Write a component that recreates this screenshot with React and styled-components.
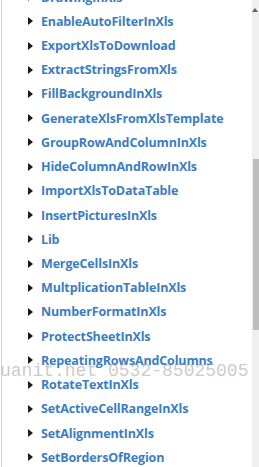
import React from "react";
import styled, { createGlobalStyle } from "styled-components";

const Global = createGlobalStyle`
  html, body { margin: 0; padding: 0; background: #ffffff; }
  body { width: 259px; height: 467px; overflow: hidden; }
`;

const Frame = styled.div`
  position: relative;
  display: flex;
  width: 259px;
  height: 467px;
  overflow: hidden;
  background: #ffffff;
`;

const Panel = styled.div`
  flex: 1;
  margin-left: 1px;
  border-left: 1px solid #d4d4d4;
  overflow: hidden;
`;

const List = styled.ul`
  list-style: none;
  margin: -15px 0 0 0;
  padding: 0 0 0 25px;
`;

const Row = styled.li`
  display: flex;
  align-items: center;
  height: 24.22px;
  gap: 8px;
`;

const Arrow = styled.span`
  width: 0;
  height: 0;
  border-top: 4.5px solid transparent;
  border-bottom: 4.5px solid transparent;
  border-left: 5px solid #1a1a1a;
  margin-left: 1px;
`;

const Label = styled.a`
  font-family: "Open Sans", "Noto Sans", sans-serif;
  font-weight: 700;
  font-size: 12.5px;
  color: #3a7dc2;
  text-decoration: none;
  white-space: nowrap;
  letter-spacing: -0.15px;
`;

const Track = styled.div`
  width: 7px;
  background: #efefef;
  display: flex;
  flex-direction: column;
  align-items: flex-end;
`;

const TopArrow = styled.div`
  margin: 8px 1px 0 0;
  width: 0;
  height: 0;
  border-left: 3px solid transparent;
  border-right: 3px solid transparent;
  border-bottom: 4px solid #606060;
`;

const Thumb = styled.div`
  margin-top: 147px;
  width: 6px;
  height: 171px;
  background: #bdbdbd;
`;

const Watermark = styled.div`
  position: absolute;
  left: 0;
  top: 361px;
  font-family: "Liberation Mono", "Courier New", monospace;
  font-size: 18px;
  color: rgba(150, 150, 150, 0.5);
  white-space: nowrap;
  pointer-events: none;
`;

const items = [
  "DrawingInXls",
  "EnableAutoFilterInXls",
  "ExportXlsToDownload",
  "ExtractStringsFromXls",
  "FillBackgroundInXls",
  "GenerateXlsFromXlsTemplate",
  "GroupRowAndColumnInXls",
  "HideColumnAndRowInXls",
  "ImportXlsToDataTable",
  "InsertPicturesInXls",
  "Lib",
  "MergeCellsInXls",
  "MultplicationTableInXls",
  "NumberFormatInXls",
  "ProtectSheetInXls",
  "RepeatingRowsAndColumns",
  "RotateTextInXls",
  "SetActiveCellRangeInXls",
  "SetAlignmentInXls",
  "SetBordersOfRegion",
];

export default function App() {
  return (
    <>
      <Global />
      <Frame>
        <Panel>
          <List>
            {items.map((t) => (
              <Row key={t}>
                <Arrow />
                <Label>{t}</Label>
              </Row>
            ))}
          </List>
        </Panel>
        <Track>
          <TopArrow />
          <Thumb />
        </Track>
        <Watermark>uanit.net 0532-85025005</Watermark>
      </Frame>
    </>
  );
}
